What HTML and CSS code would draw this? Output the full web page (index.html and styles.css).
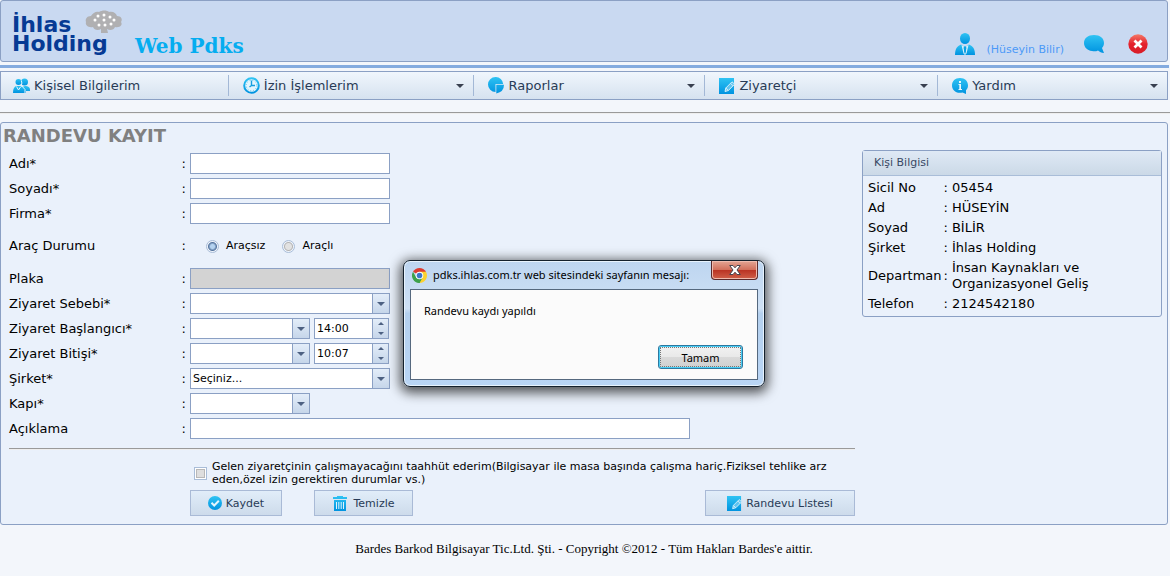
FILE: index.html
```html
<!DOCTYPE html>
<html lang="tr">
<head>
<meta charset="utf-8">
<title>Web Pdks</title>
<link rel="stylesheet" href="styles.css">
</head>
<body>
<svg class="defs" aria-hidden="true">
  <defs>
    <linearGradient id="blue" x1="0" y1="0" x2="0" y2="1"><stop offset="0" stop-color="#2fc3f3"/><stop offset="1" stop-color="#0093e0"/></linearGradient>
    <linearGradient id="red" x1="0" y1="0" x2="0" y2="1"><stop offset="0" stop-color="#f47a68"/><stop offset=".5" stop-color="#e4202c"/><stop offset="1" stop-color="#d81e28"/></linearGradient>
  </defs>
  <symbol id="edit" viewBox="0 0 16 16">
    <path fill="url(#blue)" d="M0 0H15V16H0Z"/>
    <path fill="#5fc4f0" stroke="#d5effb" stroke-width="1" d="M6 13.500L6.800 10L13 3.800L15.600 6.200L9.400 12.500ZM6.800 10L9.400 12.500M11.500 5.300L14 7.800"/>
  </symbol>
</svg>

<header class="header">
  <div class="brand">
    <div class="logo">
      İhlas<br>Holding
      <svg class="tree" viewBox="0 0 38 24" aria-hidden="true">
        <path fill="#b0b0b2" d="M16 23V19C13 21 9 20 8 17C3 18 0 15 1 12C0 9 2 6 6 6C8 3 11 1 14 2C17 0 22 0 24 2C28 1 31 3 32 6C36 6 38 9 36 12C38 15 35 18 30 17C29 20 25 21 22 19L23 23Z"/>
        <g fill="#fff"><circle cx="13" cy="6" r="1.500"/><circle cx="19" cy="5" r="1.500"/><circle cx="25" cy="7" r="1.500"/><circle cx="10" cy="10" r="1.500"/><circle cx="19" cy="10" r="1.500"/><circle cx="29" cy="10" r="1.500"/><circle cx="14" cy="15" r="1.500"/><circle cx="20" cy="15" r="1.500"/><circle cx="26" cy="14" r="1.500"/></g>
      </svg>
    </div>
    <span class="product">Web Pdks</span>
  </div>
  <div class="tools">
    <svg width="20" height="22" viewBox="0 0 20 22" aria-hidden="true"><ellipse cx="10" cy="5.500" rx="5" ry="5.500" fill="url(#blue)"/><path fill="url(#blue)" d="M0 22C0 16 2 13 6 11.500L10 14L14 11.500C18 13 20 16 20 22Z"/><path fill="#d8effa" d="M6.500 12L9 13.500L8.500 15L10 21L11.500 15L11 13.500L13.500 12L11.500 20.500L10 22L8.500 20.500Z"/><path fill="#089ee4" d="M9 13.500H11L10.700 15L11 18L10 21L9 18L9.300 15Z"/></svg>
    <a class="user" href="#">(Hüseyin Bilir)</a>
    <a class="chat" href="#" aria-label="Mesajlar"><svg width="20" height="20" viewBox="0 0 20 20"><path fill="url(#blue)" d="M10 1C16 1 20 4 20 9C20 11 19 13 18 14L20 19C17 19 16 18 14 16.500C12 17.500 10 17.500 8 17C3 16.500 0 13 0 9C0 4 4 1 10 1Z"/></svg></a>
    <a class="exit" href="#" aria-label="Çıkış"><svg width="20" height="20" viewBox="0 0 20 20"><circle cx="10" cy="10" r="9.700" fill="url(#red)"/><path stroke="#fff" stroke-width="2.800" d="M6.500 6.500L13.500 13.500M13.500 6.500L6.500 13.500"/></svg></a>
  </div>
</header>

<nav class="menu">
  <a href="#"><svg width="17" height="16" viewBox="0 0 17 16"><g fill="url(#blue)"><circle cx="5.500" cy="4" r="3"/><circle cx="11.500" cy="4" r="3.500"/><path d="M3 8H7L9 9L12 8C15 8 17 9 17 12V13H13V15H0C0 11 1 9 3 8Z"/></g><path fill="none" stroke="#e8f5fc" d="M8.300 2.500Q9.500 5 8.300 7.500L12 11.500V15M3.500 8.500L5.500 12L7.500 9"/></svg>Kişisel Bilgilerim</a>
  <a class="drop" href="#"><svg width="17" height="17" viewBox="0 0 17 17"><circle cx="8.500" cy="8.500" r="7.300" fill="#e4f5fd" stroke="url(#blue)" stroke-width="2"/><circle cx="8.500" cy="8.500" r="5.300" fill="none" stroke="#58c0ee" stroke-dasharray="1 1.800"/><path fill="none" stroke="#169fe0" stroke-width="1.400" d="M8.500 3.500V8.500H12M8.500 8.500L6.500 10"/></svg>İzin İşlemlerim</a>
  <a class="drop" href="#"><svg width="17" height="17" viewBox="0 0 17 17"><path fill="url(#blue)" d="M7.500 0A7.500 7.500 0 0 1 15.200 7H7.500V15A7.500 7.500 0 0 1 7.500 0ZM8.300 7.800H16Q16 15 8.300 16.500Z"/></svg>Raporlar</a>
  <a class="drop" href="#"><svg width="16" height="16"><use href="#edit"/></svg>Ziyaretçi</a>
  <a class="drop" href="#"><svg width="16" height="16" viewBox="0 0 16 16"><path fill="url(#blue)" d="M8 0C13 0 16 3 16 7.500C16 9.500 15.200 11 14 12.300L14 16L10.500 14.500C4 16 0 12 0 7.500C0 3 3 0 8 0Z"/><path fill="#e8f7fd" d="M7 3H9V5H7ZM6.500 6H9V11H10V12H6.500V11H7.300V7H6.500Z"/></svg>Yardım</a>
</nav>

<hr class="rule">

<main class="panel">
  <form class="form">
    <h1>RANDEVU KAYIT</h1>
    <div class="fields">
      <div class="row"><label for="adi">Adı*<span>:</span></label><input class="box mid" id="adi" type="text"></div>
      <div class="row"><label for="soyadi">Soyadı*<span>:</span></label><input class="box mid" id="soyadi" type="text"></div>
      <div class="row"><label for="firma">Firma*<span>:</span></label><input class="box mid" id="firma" type="text"></div>
      <div class="row tall" role="radiogroup" aria-labelledby="arac"><div class="label" id="arac">Araç Durumu<span>:</span></div>
        <div class="radios"><label><input type="radio" name="arac" checked>Araçsız</label><label><input type="radio" name="arac">Araçlı</label></div></div>
      <div class="row"><label for="plaka">Plaka<span>:</span></label><input class="box mid" id="plaka" type="text" disabled></div>
      <div class="row"><label for="sebep">Ziyaret Sebebi*<span>:</span></label><div class="combo mid"><select id="sebep"><option></option></select></div></div>
      <div class="row"><label for="bas">Ziyaret Başlangıcı*<span>:</span></label><div class="combo short"><select id="bas"><option></option></select></div>
        <div class="time"><input type="text" value="14:00" aria-label="Başlangıç saati"><div><button type="button" aria-label="Artır"></button><button type="button" class="down" aria-label="Azalt"></button></div></div></div>
      <div class="row"><label for="bit">Ziyaret Bitişi*<span>:</span></label><div class="combo short"><select id="bit"><option></option></select></div>
        <div class="time"><input type="text" value="10:07" aria-label="Bitiş saati"><div><button type="button" aria-label="Artır"></button><button type="button" class="down" aria-label="Azalt"></button></div></div></div>
      <div class="row"><label for="sirket">Şirket*<span>:</span></label><div class="combo mid"><select id="sirket"><option>Seçiniz...</option></select></div></div>
      <div class="row"><label for="kapi">Kapı*<span>:</span></label><div class="combo short"><select id="kapi"><option></option></select></div></div>
      <div class="row"><label for="aciklama">Açıklama<span>:</span></label><input class="box long" id="aciklama" type="text"></div>
    </div>
    <hr class="rule">
    <div class="agree">
      <input type="checkbox" id="taahhut">
      <label for="taahhut">Gelen ziyaretçinin çalışmayacağını taahhüt ederim(Bilgisayar ile masa başında çalışma hariç.Fiziksel tehlike arz eden,özel izin gerektiren durumlar vs.)</label>
    </div>
    <div class="actions">
      <button type="button" class="btn save"><svg width="14" height="14" viewBox="0 0 14 14"><circle cx="7" cy="7" r="7" fill="url(#blue)"/><path fill="none" stroke="#e3f5fd" stroke-width="2" d="M3.500 6.800L6.200 9.500L10.800 4.800"/></svg>Kaydet</button>
      <button type="button" class="btn clear"><svg class="bin" width="14" height="15" viewBox="0 0 14 15"><path fill="url(#blue)" d="M4 0H10V1H14V3H0V1H4ZM1 4H13V15H1Z"/><path stroke="#dff3fc" d="M3.500 6V13M5.800 6V13M8.200 6V13M10.500 6V13"/></svg>Temizle</button>
      <button type="button" class="btn list"><svg width="15" height="15"><use href="#edit"/></svg>Randevu Listesi</button>
    </div>
  </form>

  <aside class="card">
    <h2>Kişi Bilgisi</h2>
    <table>
      <tr><th>Sicil No</th><td>:</td><td>05454</td></tr>
      <tr><th>Ad</th><td>:</td><td>HÜSEYİN</td></tr>
      <tr><th>Soyad</th><td>:</td><td>BİLİR</td></tr>
      <tr><th>Şirket</th><td>:</td><td>İhlas Holding</td></tr>
      <tr><th>Departman</th><td>:</td><td>İnsan Kaynakları ve<br>Organizasyonel Geliş</td></tr>
      <tr><th>Telefon</th><td>:</td><td>2124542180</td></tr>
    </table>
  </aside>
</main>

<footer>Bardes Barkod Bilgisayar Tic.Ltd. Şti. - Copyright ©2012 - Tüm Hakları Bardes'e aittir.</footer>

<div class="dialog" role="alertdialog" aria-labelledby="dlg-title" aria-describedby="dlg-text">
  <div class="titlebar">
    <svg width="15" height="15" viewBox="0 0 16 16" aria-hidden="true"><path fill="#dd3b30" d="M8 8L1.100 4A8 8 0 0 1 14.900 4Z"/><path fill="#fcd22f" d="M8 8V4H14.900A8 8 0 0 1 8 16Z"/><path fill="#3da14b" d="M8 8L8.500 16A8 8 0 0 1 1.100 4L4.500 10L8 12L11.400 10L8 16Z"/><circle cx="8" cy="8" r="4" fill="#fff"/><circle cx="8" cy="8" r="3" fill="#3c78c8"/></svg>
    <span id="dlg-title">pdks.ihlas.com.tr web sitesindeki sayfanın mesajı:</span>
    <button type="button" class="close" aria-label="Kapat"><svg width="12" height="10" viewBox="0 0 12 10"><path fill="#fff" stroke="#47454f" d="M.700.500H4L6 2.800L8 .500H11.300L8 5L11.300 9.500H8L6 7.200L4 9.500H.700L4 5Z"/></svg></button>
  </div>
  <div class="content">
    <p id="dlg-text">Randevu kaydı yapıldı</p>
    <button type="button" class="ok">Tamam</button>
  </div>
</div>
</body>
</html>
```

FILE: styles.css
```css
* { box-sizing: border-box; }

body {
  margin: 0;
  padding-right: 2px;
  background: #f3f6fb;
  font-family: "DejaVu Sans", sans-serif;
  font-size: 13px;
  line-height: 16px;
  color: #000;
}

a { text-decoration: none; }
button, input, select { font-family: inherit; margin: 0; }
svg { flex: none; display: block; }
.defs { position: absolute; width: 0; height: 0; }

.header {
  display: flex;
  justify-content: space-between;
  height: 62px;
  padding: 0 19px 0 11px;
  border: 1px solid #8ba0c4;
  border-radius: 3px;
  background: #c9d9f1;
}

.brand { display: flex; gap: 17px; }
.logo {
  position: relative;
  width: 106px;
  padding-top: 14px;
  font-size: 22px;
  font-weight: bold;
  line-height: 19px;
  color: #063a94;
}
.tree { position: absolute; left: 73px; top: 9px; width: 38px; height: 24px; }
.product {
  padding-top: 34px;
  font-family: "DejaVu Serif", serif;
  font-size: 20px;
  font-weight: bold;
  line-height: 22px;
  color: #05adf0;
}

.tools { display: flex; align-items: center; padding-top: 26px; }
.user { margin: 12px 20px 0 11px; font-size: 11px; color: #4c99f8; }
.chat { margin-right: 24px; }

.menu {
  position: relative;
  display: grid;
  grid-template-columns: 227fr 245fr 232fr 233fr 230fr;
  height: 29px;
  margin-top: 9px;
  padding: 3px 0;
  border: 1px solid #8ba0c4;
  background: linear-gradient(#f0f6fd, #d6e2ef);
}
.menu::before {
  content: "";
  position: absolute;
  left: -1px;
  right: -2px;
  top: -7px;
  height: 3px;
  background: #84abdf;
}
.menu a {
  display: flex;
  align-items: center;
  gap: 4px;
  padding: 0 9px 0 14px;
  border-left: 1px solid #a3b8d6;
  color: #283b56;
}
.menu a:first-child { border-left: 0; padding-left: 12px; }
.drop::after {
  content: "";
  margin-left: auto;
  border: 4px solid transparent;
  border-top-color: #394050;
  border-bottom: 0;
}

.rule { height: 2px; margin: 12px -2px 8px 0; border: 0; border-top: 1px solid #9a9a9a; border-bottom: 1px solid #eee; }

.panel {
  display: flex;
  align-items: flex-start;
  justify-content: space-between;
  gap: 7px;
  padding: 2px 5px 8px 2px;
  border: 1px solid #8ba0c4;
  border-radius: 3px;
  background: #eaf1fb;
}
.form { flex: 0 1 852px; }
h1 { margin: 0 0 6px; font-size: 18px; line-height: 22px; color: #808080; }
.fields { display: flex; flex-direction: column; gap: 4px; padding-left: 6px; }
.row { display: flex; align-items: center; gap: 4px; height: 21px; }
.row.tall { height: 36px; }
.row > label, .label { display: flex; justify-content: space-between; width: 177px; }

.box, .combo, .time { height: 21px; border: 1px solid #8ba0c4; background: #fff; }
.box:disabled { background: #d3d3d3; }
.mid { width: 200px; }
.short { width: 120px; }
.long { width: 500px; }
.combo { position: relative; }
.combo select {
  width: 100%;
  height: 19px;
  padding: 0 20px 0 2px;
  border: 0;
  background: none;
  appearance: none;
  font-size: 11px;
  color: #000;
}
.combo::after {
  content: "";
  position: absolute;
  inset: 0 0 0 auto;
  width: 16px;
  border-left: 1px solid #8ba0c4;
  background: linear-gradient(#e3edf9, #c6d6ea);
  pointer-events: none;
}
.combo::before {
  content: "";
  position: absolute;
  z-index: 1;
  right: 4px;
  top: 8px;
  border: 4px solid transparent;
  border-top-color: #4d6182;
  border-bottom: 0;
  pointer-events: none;
}
.time { display: flex; width: 75px; }
.time input { flex: 1; min-width: 0; padding: 0 2px; border: 0; font-size: 11px; }
.time div { display: flex; flex-direction: column; width: 16px; border-left: 1px solid #8ba0c4; background: linear-gradient(#e3edf9, #c6d6ea); }
.time button { display: flex; flex: 1; align-items: center; justify-content: center; padding: 0; border: 0; background: none; }
.time button::after { content: ""; border: 3px solid transparent; border-bottom-color: #4d6182; border-top: 0; }
.time .down::after { border: 3px solid transparent; border-top-color: #4d6182; border-bottom: 0; }

.radios { display: flex; gap: 17px; padding-left: 16px; font-size: 11px; }
.radios label { display: flex; align-items: center; gap: 7px; }
.radios input {
  width: 13px;
  height: 13px;
  appearance: none;
  border: 1px solid #a9bdd8;
  border-radius: 50%;
  background: radial-gradient(circle, #e2e2e2 0 3px, #b4b4b4 4px, #eef3fa 5px);
}
.radios input:checked { background: radial-gradient(circle, #b5d3f0 0 2px, #56759f 4px, #eef3fa 5px); }

.form .rule { margin: 9px 0 10px 6px; }
.agree { display: flex; align-items: center; gap: 5px; padding-left: 191px; }
.agree input {
  flex: none;
  width: 13px;
  height: 13px;
  appearance: none;
  border: 1px solid #a9bdd8;
  background: #dedede;
  box-shadow: inset 0 0 0 1px #fff, inset 0 0 0 2px #b8b8b8;
}
.agree label { font-size: 11px; line-height: 13px; }

.actions { display: flex; gap: 32px; margin-top: 4px; padding-left: 187px; }
.btn {
  display: flex;
  align-items: center;
  justify-content: center;
  gap: 4px;
  height: 26px;
  padding: 0;
  border: 1px solid #a9bad6;
  background: linear-gradient(#e1edf9, #cddbeb);
  font-size: 11px;
  color: #283b56;
}
.bin { margin-right: 3px; }
.save { width: 92px; }
.clear { width: 99px; }
.list { width: 150px; margin-left: auto; }

.card { width: 300px; margin-top: 25px; padding-bottom: 2px; border: 1px solid #8ba0c4; border-radius: 3px; }
.card h2 {
  margin: 0;
  padding: 4px 11px;
  border-bottom: 1px solid #a9bdd8;
  background: linear-gradient(#dfe9f5, #cbd9e7);
  font-size: 11px;
  font-weight: normal;
  color: #384864;
}
.card table { margin: 2px 0 0 3px; border-collapse: collapse; }
.card th, .card td { padding: 2px; }
.card th { padding-right: 0; font-weight: normal; text-align: left; }

footer { padding: 16px 0 18px; text-align: center; font-family: "Liberation Serif", serif; font-size: 13px; }

.dialog {
  position: absolute;
  left: 0;
  right: 2px;
  top: 260px;
  width: 362px;
  height: 127px;
  margin: 0 auto;
  padding: 0 6px 6px;
  border: 1px solid #14202c;
  border-radius: 7px;
  background: linear-gradient(#bdd5f0, #cfe1f5 38%, #b4d0ee 42%, #b9d5f5);
  box-shadow: inset 0 0 0 1px #e8f3fd, 0 3px 12px 3px rgba(0, 0, 0, .65);
  font-family: "Noto Sans", sans-serif;
  font-size: 11px;
}
.titlebar { display: flex; align-items: center; gap: 6px; height: 28px; padding-left: 2px; white-space: nowrap; }
.close {
  display: flex;
  flex: none;
  align-items: center;
  justify-content: center;
  align-self: flex-start;
  width: 47px;
  height: 19px;
  margin-left: auto;
  padding: 0;
  border: 1px solid #5b2a2c;
  border-top: 0;
  border-radius: 0 0 4px 4px;
  background: linear-gradient(#e3a594, #d2705c 48%, #b93222 50%, #d0604a);
  box-shadow: inset 0 0 0 1px #efbbae;
}
.content {
  display: flex;
  flex-direction: column;
  justify-content: space-between;
  height: 91px;
  padding: 13px 14px 10px 13px;
  border: 1px solid #55687e;
  background: #fbfbfb;
}
.content p { margin: 0; }
.ok {
  align-self: flex-end;
  width: 85px;
  height: 24px;
  padding: 0;
  border: 1px solid #2d789f;
  border-radius: 3px;
  outline: 1px dotted #777;
  outline-offset: -3px;
  background: linear-gradient(#f2f2f2, #e9e9e9 48%, #dadada 50%, #cfcfcf);
  box-shadow: inset 0 0 0 1px #48cdf5;
  font-size: 11px;
  color: #000;
}
```
